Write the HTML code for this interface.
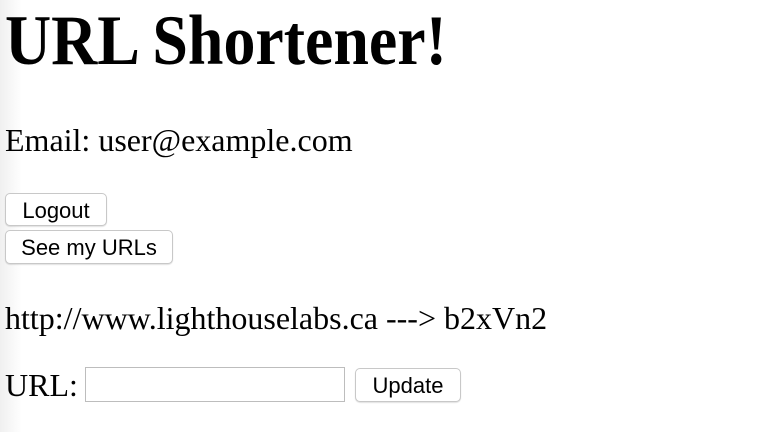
<!DOCTYPE html>
<html><head><style>
body{margin:0;width:780px;height:432px;background:linear-gradient(to right,#f0f0f0 0,#fff 22px);position:relative;overflow:hidden;font-family:"Liberation Serif",serif;color:#000}
.t{position:absolute;white-space:nowrap;margin:0}
.b{position:absolute;box-sizing:border-box;background:#fff;border:1px solid #c8c8c8;border-radius:5px;box-shadow:0 1px 1px rgba(0,0,0,.12);font-family:"Liberation Sans",sans-serif;font-size:22px;text-align:center;color:#000;display:flex;align-items:center;justify-content:center}
</style></head><body>
<h1 class="t" style="left:5px;top:-4px;font-size:71px;font-weight:bold;line-height:90px;transform:scaleX(0.9);transform-origin:0 0">URL Shortener!</h1>
<div class="t" style="left:5px;top:122px;font-size:32px;line-height:36px">Email: user@example.com</div>
<div class="b" style="left:5px;top:193px;width:102px;height:33px;padding-top:2px">Logout</div>
<div class="b" style="left:5px;top:230px;width:168px;height:34px;padding-top:2px">See my URLs</div>
<div class="t" style="left:5px;top:300px;font-size:32px;line-height:36px">http://www.lighthouselabs.ca ---&gt; b2xVn2</div>
<div class="t" style="left:5px;top:367px;font-size:32px;line-height:36px">URL:</div>
<div style="position:absolute;left:85px;top:367px;width:260px;height:35px;box-sizing:border-box;border:1px solid #bdbdbd;background:#fff"></div>
<div class="b" style="left:355px;top:368px;width:106px;height:34px;padding-top:2px">Update</div>
</body></html>
